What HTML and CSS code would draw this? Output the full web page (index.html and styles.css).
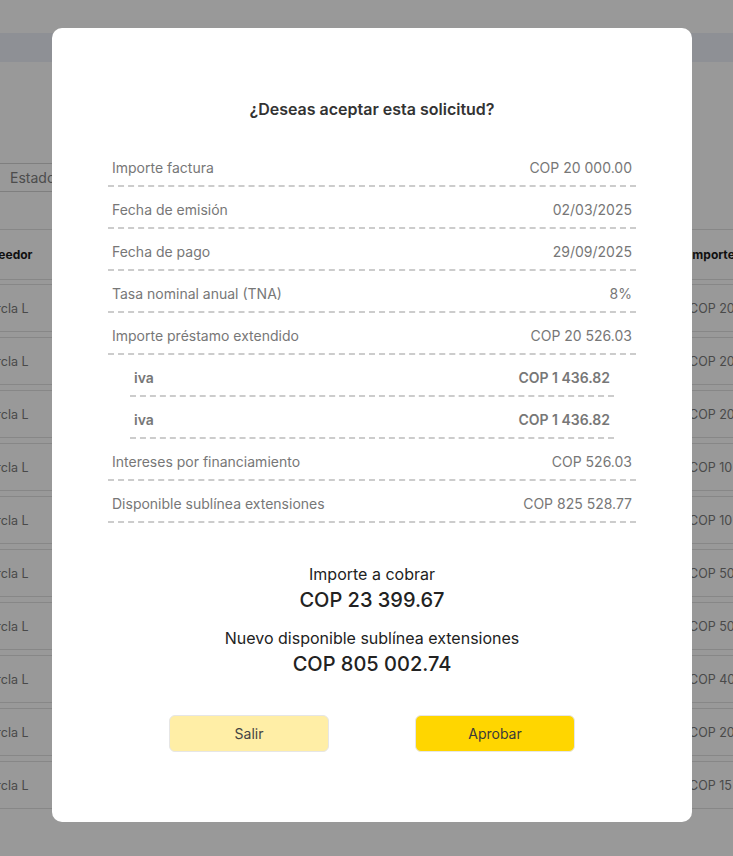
FILE: index.html
```html
<!DOCTYPE html>
<html lang="es">
<head>
<meta charset="utf-8">
<title>Solicitud</title>
<link rel="stylesheet" href="styles.css">
</head>
<body>
<div class="page">
  <div class="topbar"></div>
  <div class="subbar"></div>
  <div class="content">
    <div class="filter">Estado</div>
    <div class="table">
      <div class="thead">
        <div class="cell-left">Acreedor</div>
        <div class="cell-right">Importe</div>
      </div>
      <div class="trow"><div class="cell-left">Marcla L</div><div class="cell-right">COP 20 000.00</div></div>
      <div class="trow"><div class="cell-left">Marcla L</div><div class="cell-right">COP 20 000.00</div></div>
      <div class="trow"><div class="cell-left">Marcla L</div><div class="cell-right">COP 20 000.00</div></div>
      <div class="trow"><div class="cell-left">Marcla L</div><div class="cell-right">COP 10 000.00</div></div>
      <div class="trow"><div class="cell-left">Marcla L</div><div class="cell-right">COP 10 000.00</div></div>
      <div class="trow"><div class="cell-left">Marcla L</div><div class="cell-right">COP 50 000.00</div></div>
      <div class="trow"><div class="cell-left">Marcla L</div><div class="cell-right">COP 50 000.00</div></div>
      <div class="trow"><div class="cell-left">Marcla L</div><div class="cell-right">COP 40 000.00</div></div>
      <div class="trow"><div class="cell-left">Marcla L</div><div class="cell-right">COP 20 000.00</div></div>
      <div class="trow"><div class="cell-left">Marcla L</div><div class="cell-right">COP 15 000.00</div></div>
    </div>
  </div>
</div>

<div class="overlay">
  <div class="modal">
    <h2 class="title">¿Deseas aceptar esta solicitud?</h2>
    <div class="list">
      <div class="row"><span>Importe factura</span><span>COP 20 000.00</span></div>
      <div class="row"><span>Fecha de emisión</span><span>02/03/2025</span></div>
      <div class="row"><span>Fecha de pago</span><span>29/09/2025</span></div>
      <div class="row"><span>Tasa nominal anual (TNA)</span><span>8%</span></div>
      <div class="row"><span>Importe préstamo extendido</span><span>COP 20 526.03</span></div>
      <div class="row sub"><span>iva</span><span>COP 1 436.82</span></div>
      <div class="row sub"><span>iva</span><span>COP 1 436.82</span></div>
      <div class="row"><span>Intereses por financiamiento</span><span>COP 526.03</span></div>
      <div class="row"><span>Disponible sublínea extensiones</span><span>COP 825 528.77</span></div>
    </div>
    <div class="summary">
      <div class="sum-label">Importe a cobrar</div>
      <div class="sum-value">COP 23 399.67</div>
      <div class="sum-label second">Nuevo disponible sublínea extensiones</div>
      <div class="sum-value">COP 805 002.74</div>
    </div>
    <div class="actions">
      <button class="btn btn-light">Salir</button>
      <button class="btn btn-primary">Aprobar</button>
    </div>
  </div>
</div>
</body>
</html>
```
FILE: styles.css
```css
html, body {
  margin: 0;
  padding: 0;
  height: 100%;
  overflow: hidden;
}
body {
  font-family: Inter, "Noto Sans", sans-serif;
  background: #ffffff;
}
.page {
  width: 733px;
}
.topbar {
  height: 33px;
  background: #ffffff;
}
.subbar {
  height: 29px;
  background: #edf0f8;
}
.content {
  padding-top: 101px;
}
.filter {
  box-sizing: border-box;
  height: 29px;
  width: 140px;
  margin-left: -1px;
  border: 1px solid #d4d4d4;
  padding-left: 10px;
  font-size: 14px;
  line-height: 27px;
  color: #808080;
}
.table {
  margin-top: 37px;
  margin-left: -26px;
  border-top: 1px solid #e1e1e1;
}
.thead, .trow {
  display: grid;
  grid-template-columns: 715px 1fr;
  align-items: center;
  white-space: nowrap;
}
.thead {
  height: 49px;
  font-size: 12px;
  font-weight: 700;
  color: #1c1c1c;
  border-bottom: 1px solid #e1e1e1;
  margin-bottom: 4px;
}
.trow {
  height: 46px;
  font-size: 12.5px;
  color: #7b7b7b;
  border-top: 1px solid #e1e1e1;
  border-bottom: 1px solid #e1e1e1;
  margin-bottom: 5px;
}
.cell-left {
  padding-left: 4px;
}
.cell-right {
  padding-left: 0;
}

.overlay {
  position: fixed;
  inset: 0;
  background: rgba(0, 0, 0, 0.4);
  padding: 28px 0 0 52px;
}
.modal {
  box-sizing: border-box;
  width: 640px;
  background: #ffffff;
  border-radius: 10px;
  padding: 71px 56px 70px;
}
.title {
  margin: 0;
  text-align: center;
  font-size: 16px;
  line-height: 20px;
  font-weight: 600;
  color: #333333;
}
.list {
  margin-top: 26px;
}
.row {
  display: flex;
  justify-content: space-between;
  padding: 13px 4px 7px;
  font-size: 14px;
  line-height: 20px;
  color: #777777;
  border-bottom: 2px dashed #cccccc;
}
.row.sub {
  margin: 0 22px;
  font-weight: 600;
}
.summary {
  margin-top: 39px;
  text-align: center;
  color: #222222;
}
.sum-label {
  font-size: 16px;
  line-height: 24px;
}
.sum-label.second {
  margin-top: 12px;
}
.sum-value {
  font-size: 20px;
  line-height: 28px;
  font-weight: 500;
}
.actions {
  margin-top: 37px;
  display: flex;
  justify-content: center;
  gap: 86px;
}
.btn {
  box-sizing: border-box;
  width: 160px;
  height: 37px;
  border: 1px solid #e6e6e6;
  border-radius: 6px;
  font-family: Inter, "Noto Sans", sans-serif;
  font-size: 14px;
  color: #444444;
  cursor: pointer;
}
.btn-light {
  background: #ffeea6;
}
.btn-primary {
  background: #ffd600;
  color: #3a3a3a;
}
```
